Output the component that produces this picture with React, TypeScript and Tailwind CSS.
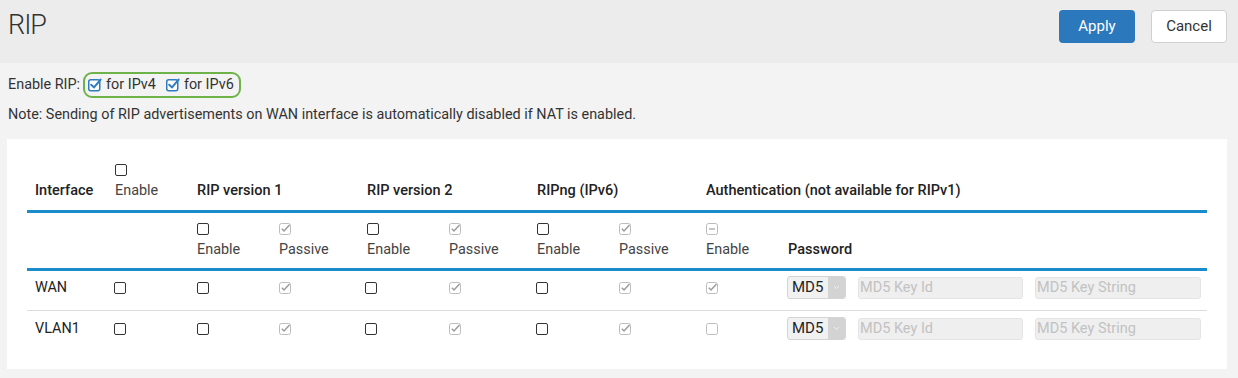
import React from 'react'

type BoxKind = 'off' | 'checkedDisabled' | 'offDisabled' | 'mixed' | 'blue'

function Box({ kind }: { kind: BoxKind }) {
  if (kind === 'off') {
    return <div className="w-3 h-3 shrink-0 rounded-[2px] border-[1.5px] border-[#333] bg-white" />
  }
  if (kind === 'blue') {
    return (
      <svg width="14" height="14" viewBox="0 0 14 14" className="shrink-0 overflow-visible">
        <rect x="0.75" y="1.75" width="11" height="11" rx="2" fill="white" stroke="#2b7cc0" strokeWidth="1.5" />
        <path d="M3.2 6.8 L6 9.4 L12.6 1.6" fill="none" stroke="#2b7cc0" strokeWidth="2" strokeLinecap="round" />
      </svg>
    )
  }
  return (
    <svg width="12" height="12" viewBox="0 0 12 12" className="shrink-0">
      <rect x="0.5" y="0.5" width="11" height="11" rx="2" fill="white" stroke="#bdbdbd" />
      {kind === 'checkedDisabled' && (
        <path d="M2.8 5.8 L5 8 L10.5 2" fill="none" stroke="#9c9c9c" strokeWidth="1.5" />
      )}
      {kind === 'mixed' && <path d="M3 6 H9" stroke="#a0a0a0" strokeWidth="1.2" />}
    </svg>
  )
}

const cols = 'grid grid-cols-[80px_82px_82px_88px_82px_88px_82px_87px_82px_1fr]'

function SubHead({ kind, label }: { kind: BoxKind; label: string }) {
  return (
    <div className="pl-2 flex flex-col items-start">
      <Box kind={kind} />
      <span className="mt-[6px] leading-[17px] text-[#444]">{label}</span>
    </div>
  )
}

function DataRow({ name, authOn, last }: { name: string; authOn: boolean; last?: boolean }) {
  return (
    <div className={`${cols} items-center pt-[5px] pb-[11px] ${last ? '' : 'border-b border-[#dcdcdc]'}`}>
      <div className="pl-2 text-[#222]">{name}</div>
      <div className="pl-[7px]"><Box kind="off" /></div>
      <div className="pl-2"><Box kind="off" /></div>
      <div className="pl-2"><Box kind="checkedDisabled" /></div>
      <div className="pl-[6px]"><Box kind="off" /></div>
      <div className="pl-2"><Box kind="checkedDisabled" /></div>
      <div className="pl-[7px]"><Box kind="off" /></div>
      <div className="pl-2"><Box kind="checkedDisabled" /></div>
      <div className="pl-2"><Box kind={authOn ? 'checkedDisabled' : 'offDisabled'} /></div>
      <div className="pl-[7px] flex items-center gap-[12px]">
        <div className="w-[59px] h-[23px] flex rounded-[3px] border border-[#d4d4d4] bg-[#f1f1f1] overflow-hidden">
          <span className="flex-1 pl-[4px] leading-[21px] text-[15px] text-[#222]">MD5</span>
          <span className="w-[17px] bg-[#d3d3d3] flex items-center justify-center">
            <svg width="7" height="5" viewBox="0 0 7 5">
              <path d="M1 1 L3.5 3.5 L6 1" fill="none" stroke="#eeeeee" strokeWidth="1" />
            </svg>
          </span>
        </div>
        <input
          disabled
          placeholder="MD5 Key Id"
          className="w-[165px] h-[22px] px-[1px] rounded-[3px] border border-[#e4e4e4] bg-[#efefef] text-[14.5px] placeholder:text-[#c2c2c2]"
        />
        <input
          disabled
          placeholder="MD5 Key String"
          className="w-[166px] h-[22px] px-[1px] rounded-[3px] border border-[#e4e4e4] bg-[#efefef] text-[14.5px] placeholder:text-[#c2c2c2]"
        />
      </div>
    </div>
  )
}

export default function App() {
  return (
    <div className="w-[1238px] h-[378px] bg-[#f3f3f3] font-['Roboto','Liberation_Sans',Arial,sans-serif] text-[14.4px] text-[#333] overflow-hidden">
      <div className="h-[63px] bg-[#ececec] flex justify-between pl-2 pr-[11px] pt-[10px]">
        <h1 className="text-[27px] leading-[30px] font-light tracking-[-1px] text-[#333]">RIP</h1>
        <div className="flex gap-4">
          <button className="w-[76px] h-[33px] rounded-[4px] bg-[#2b78bd] text-white text-[15px]">Apply</button>
          <button className="w-[76px] h-[33px] rounded-[4px] bg-white border border-[#d0d0d0] text-[#333] text-[15px]">
            Cancel
          </button>
        </div>
      </div>

      <div className="px-2 pt-[9px] flex items-center whitespace-nowrap">
        <span className="text-[#333]">Enable RIP:</span>
        <div className="ml-[3px] h-[26px] w-[158px] shrink-0 flex items-center pl-[3px] border-2 border-[#6db34a] rounded-[9px]">
          <Box kind="blue" />
          <span className="ml-[4px]">for IPv4</span>
          <span className="ml-[10px]"><Box kind="blue" /></span>
          <span className="ml-[4px]">for IPv6</span>
        </div>
      </div>
      <p className="px-2 mt-[8px] leading-[17px] text-[#333] whitespace-nowrap">
        Note: Sending of RIP advertisements on WAN interface is automatically disabled if NAT is enabled.
      </p>

      <div className="ml-[7px] mr-[11px] mt-[16px] bg-white px-5 pt-[25px] pb-[18px]">
        <div className={`${cols} items-end pb-[11px] border-b-[3px] border-[#1a8bcd] font-medium text-[14.5px] text-[#222]`}>
          <div className="pl-2 leading-[17px]">Interface</div>
          <div className="pl-2 flex flex-col items-start">
            <Box kind="off" />
            <span className="mt-[6px] leading-[17px] font-normal text-[14.4px] text-[#444]">Enable</span>
          </div>
          <div className="col-span-2 pl-2 leading-[17px]">RIP version 1</div>
          <div className="col-span-2 pl-2 leading-[17px]">RIP version 2</div>
          <div className="col-span-2 pl-2 leading-[17px]">RIPng (IPv6)</div>
          <div className="col-span-2 pl-2 leading-[17px]">Authentication (not available for RIPv1)</div>
        </div>

        <div className={`${cols} items-end pt-[10px] pb-[10px] border-b-[3px] border-[#1a8bcd]`}>
          <div />
          <div />
          <SubHead kind="off" label="Enable" />
          <SubHead kind="checkedDisabled" label="Passive" />
          <SubHead kind="off" label="Enable" />
          <SubHead kind="checkedDisabled" label="Passive" />
          <SubHead kind="off" label="Enable" />
          <SubHead kind="checkedDisabled" label="Passive" />
          <SubHead kind="mixed" label="Enable" />
          <div className="pl-2 leading-[17px] font-medium text-[14.5px] text-[#222]">Password</div>
        </div>

        <DataRow name="WAN" authOn />
        <div className="pt-px">
          <DataRow name="VLAN1" authOn={false} last />
        </div>
      </div>
    </div>
  )
}
